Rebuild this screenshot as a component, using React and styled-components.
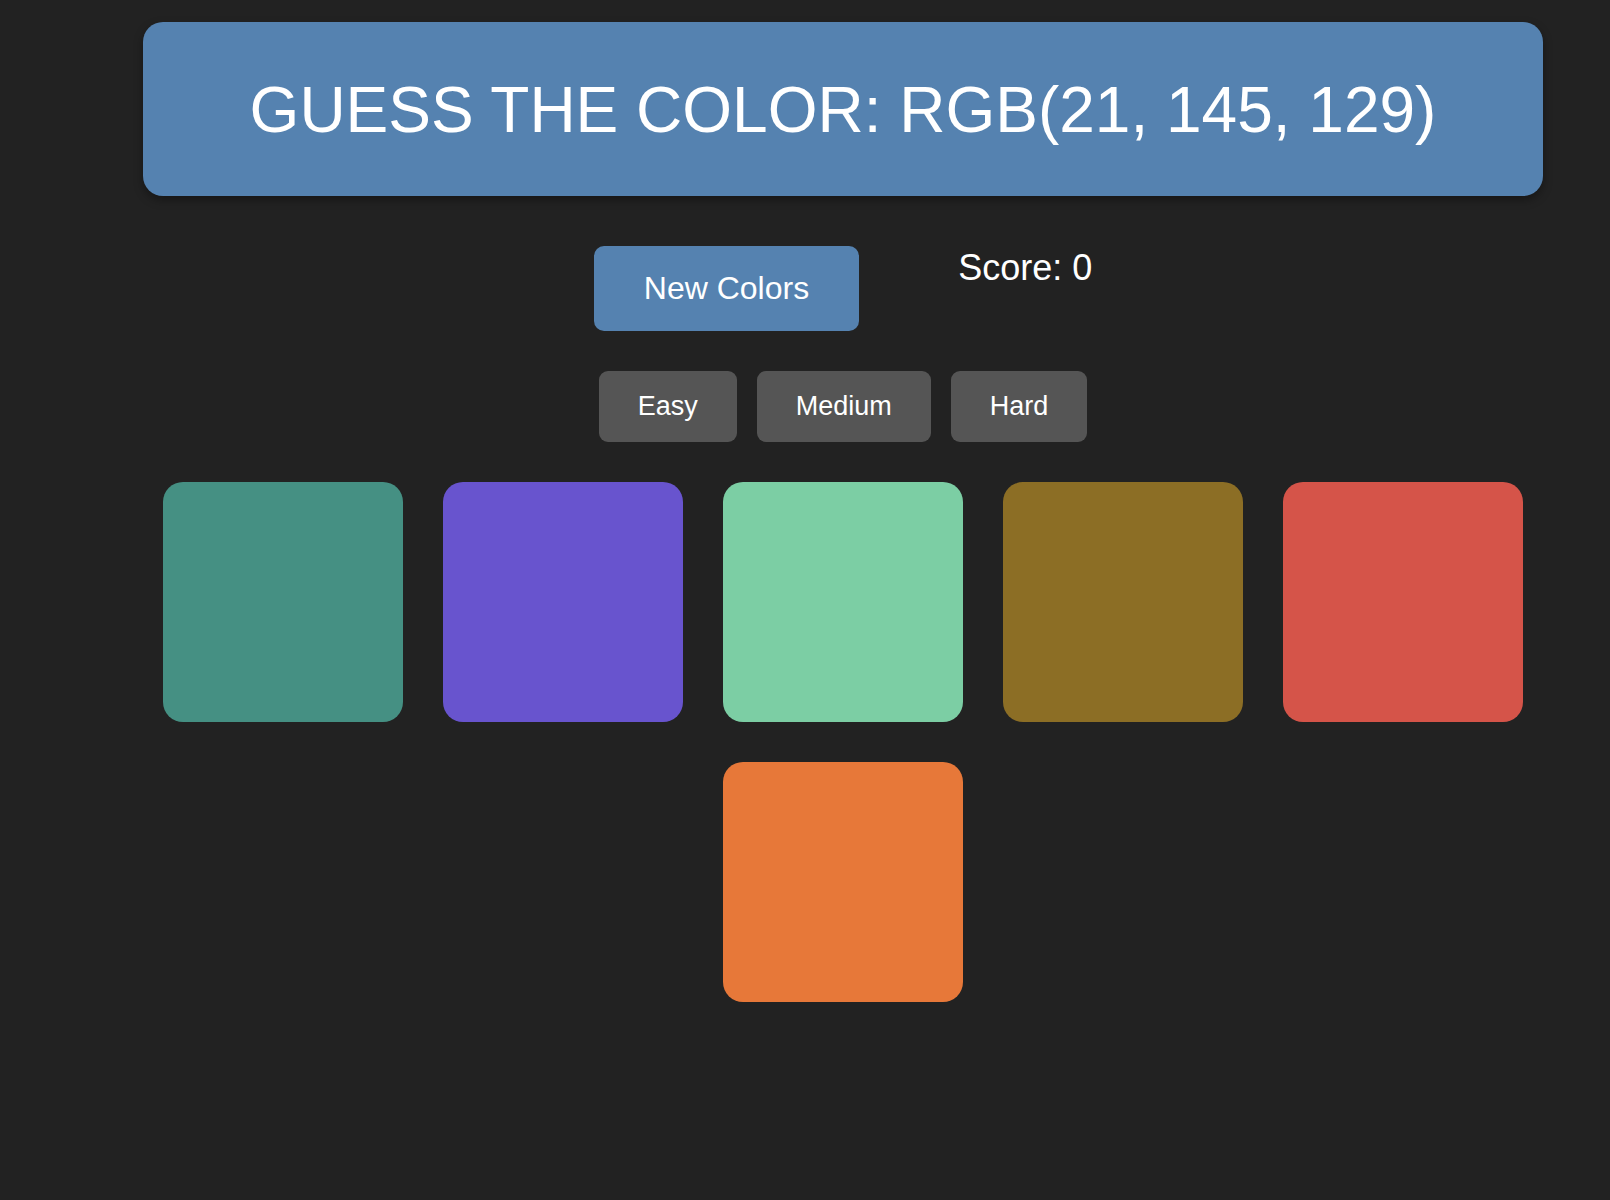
import React from "react";
import styled, { createGlobalStyle } from "styled-components";

const GlobalStyle = createGlobalStyle`
  html, body {
    margin: 0;
    padding: 0;
    background: #222222;
  }
  body {
    font-family: "Liberation Sans", Arial, sans-serif;
    color: #ffffff;
  }
`;

const Page = styled.div`
  width: 1400px;
  margin-left: 143px;
  padding-top: 22px;
  min-height: 1178px;
`;

const Header = styled.header`
  background: #5582b0;
  border-radius: 20px;
  box-shadow: 0 4px 10px rgba(0, 0, 0, 0.35);
  padding: 51px 0 49px;
  text-align: center;
`;

const Title = styled.h1`
  margin: 0;
  font-size: 64px;
  font-weight: 400;
  color: #ffffff;
  text-transform: uppercase;
`;

const ControlRow = styled.div`
  display: flex;
  justify-content: center;
  align-items: flex-start;
  margin-top: 50px;
`;

const ActionButton = styled.button`
  font-family: inherit;
  font-size: 32px;
  color: #ffffff;
  background: #5582b0;
  border: none;
  border-radius: 10px;
  padding: 24px 50px;
  cursor: pointer;
`;

const Score = styled.div`
  font-size: 36px;
  margin: 1px 0 0 99px;
  color: #ffffff;
`;

const DifficultyRow = styled.div`
  display: flex;
  justify-content: center;
  gap: 20px;
  margin-top: 40px;
`;

const DifficultyButton = styled.button`
  font-family: inherit;
  font-size: 27px;
  color: #ffffff;
  background: ${(p) => (p.$active ? "#5582b0" : "#555555")};
  border: none;
  border-radius: 9px;
  padding: 20px 39px;
  cursor: pointer;
`;

const Grid = styled.div`
  display: flex;
  flex-wrap: wrap;
  justify-content: center;
  margin-top: 20px;
`;

const Square = styled.div`
  width: 240px;
  height: 240px;
  margin: 20px;
  border-radius: 20px;
  background: ${(p) => p.$color};
  cursor: pointer;
`;

const colors = ["#459083", "#6854ce", "#7ccea4", "#8c6e25", "#d55449", "#e77839"];

export default function App() {
  return (
    <>
      <GlobalStyle />
      <Page>
        <Header>
          <Title>Guess the color: RGB(21, 145, 129)</Title>
        </Header>
        <ControlRow>
          <ActionButton>New Colors</ActionButton>
          <Score>Score: 0</Score>
        </ControlRow>
        <DifficultyRow>
          <DifficultyButton>Easy</DifficultyButton>
          <DifficultyButton>Medium</DifficultyButton>
          <DifficultyButton>Hard</DifficultyButton>
        </DifficultyRow>
        <Grid>
          {colors.map((c) => (
            <Square key={c} $color={c} />
          ))}
        </Grid>
      </Page>
    </>
  );
}
